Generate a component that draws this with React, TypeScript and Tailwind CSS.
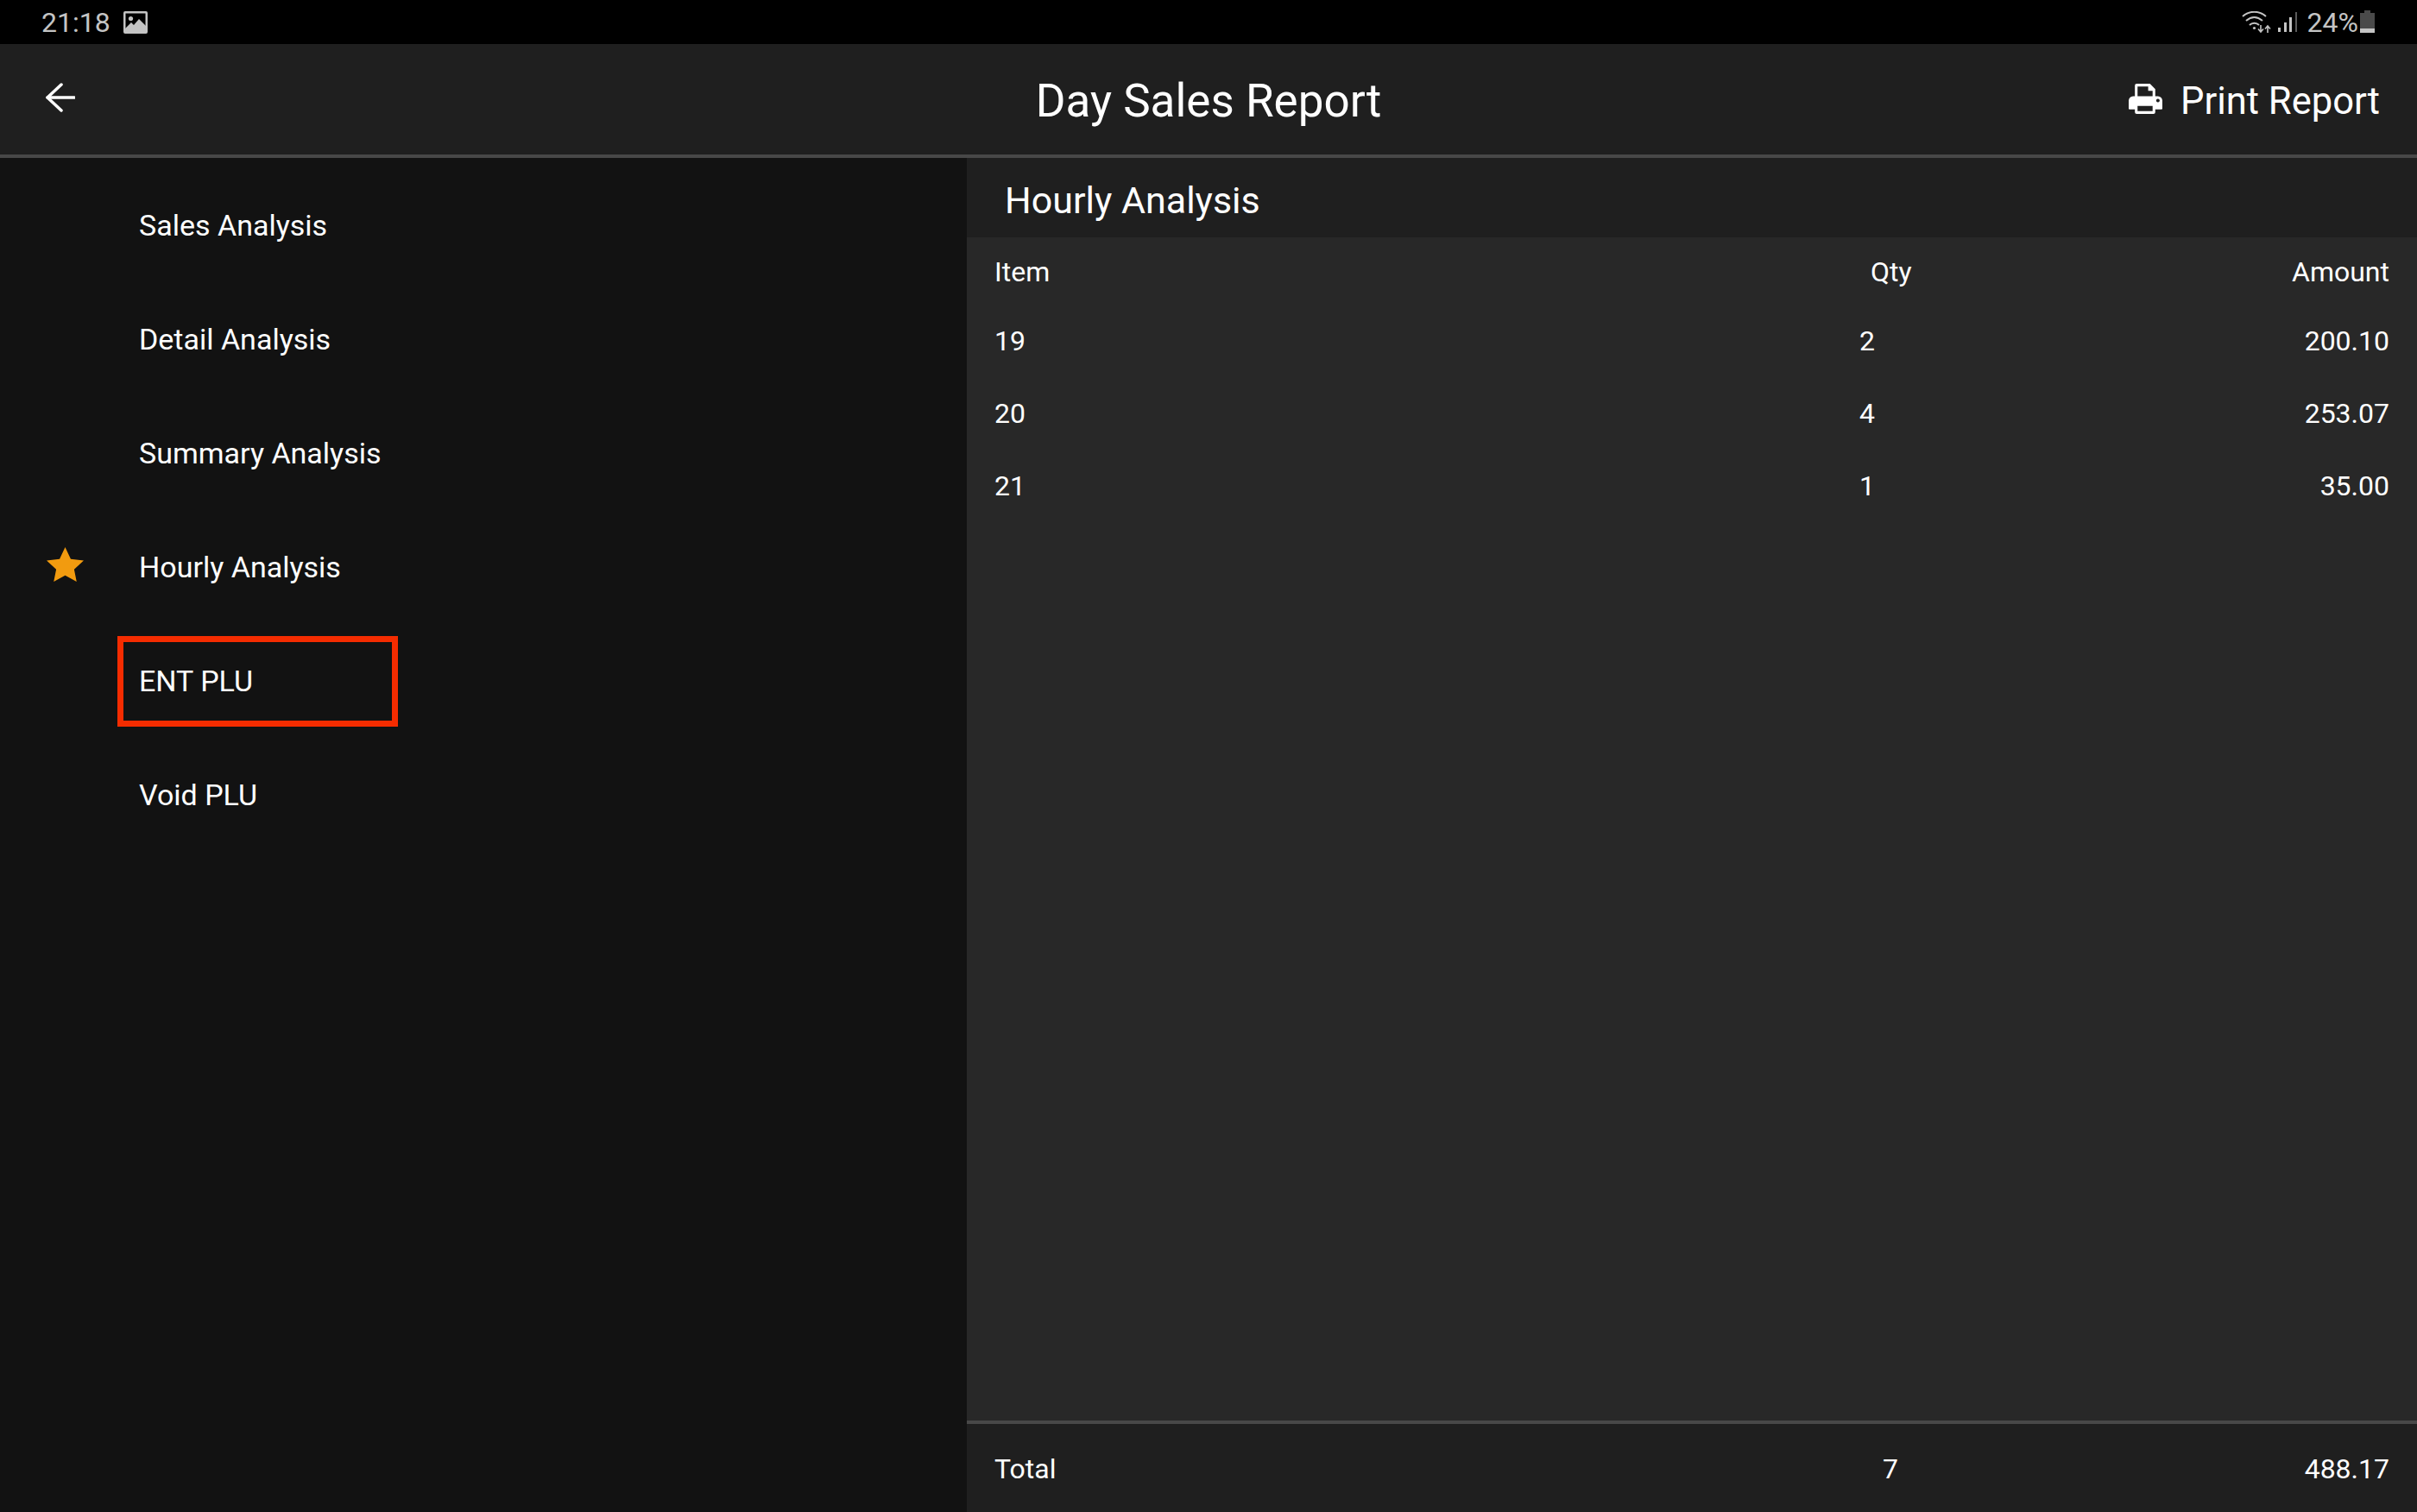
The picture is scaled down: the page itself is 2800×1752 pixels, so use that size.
const menuItems = ["Sales Analysis", "Detail Analysis", "Summary Analysis", "Hourly Analysis", "ENT PLU", "Void PLU"];

const rows = [
  { item: "19", qty: "2", amount: "200.10" },
  { item: "20", qty: "4", amount: "253.07" },
  { item: "21", qty: "1", amount: "35.00" },
];

function StatusBar() {
  return (
    <div className="flex h-[51px] items-center justify-between bg-black pl-[48px] pr-[49px] text-[32px] text-[#c4c4c4]">
      <div className="flex items-center gap-[15px]">
        <span>21:18</span>
        <svg width="28" height="26" viewBox="0 0 28 26">
          <rect x="0" y="0" width="28" height="26" rx="2" fill="#c4c4c4" />
          <rect x="2.5" y="2.5" width="23" height="21" fill="#000" />
          <circle cx="8.5" cy="8.5" r="2.6" fill="#c4c4c4" />
          <path d="M2 20 L9 13 L12 16 L18 9 L26 17 V25 H2 Z" fill="#c4c4c4" />
        </svg>
      </div>
      <div className="flex items-center">
        <svg width="34" height="26" viewBox="0 0 34 26" fill="none" stroke="#c4c4c4" strokeWidth="2">
          <path d="M1 6 C9 -1 20 -1 28 6" />
          <path d="M5 11 C11 6 18 6 24 11" />
          <path d="M9 16 C12 13 17 13 20 16" />
          <circle cx="14.5" cy="19.5" r="1.6" fill="#c4c4c4" stroke="none" />
          <path d="M22 16 V23 M19 20.5 L22 24 L25 20.5" strokeWidth="1.6" />
          <path d="M30 25 V18 M27 20.5 L30 17 L33 20.5" strokeWidth="1.6" />
        </svg>
        <svg className="ml-[8px]" width="22" height="24" viewBox="0 0 22 24" fill="#c4c4c4">
          <rect x="0" y="18" width="3" height="5" />
          <rect x="7" y="12" width="3" height="11" />
          <rect x="13" y="6" width="3" height="17" />
          <rect x="20" y="0" width="2" height="23" fill="#5a5a5a" />
        </svg>
        <span className="ml-[12px]">24%</span>
        <svg className="ml-[2px]" width="17" height="27" viewBox="0 0 17 27">
          <path d="M5 0 H12 V3 H17 V26 H0 V3 H5 Z" fill="#4a4a4a" />
          <rect x="0" y="21" width="17" height="5" fill="#c4c4c4" />
        </svg>
      </div>
    </div>
  );
}

function Header() {
  return (
    <div className="relative flex h-[132px] items-center justify-between border-b-4 border-[#484848] bg-[#1f1f1f] pb-[2px] pl-[53px] pr-[43px] text-white">
      <svg className="mb-[2px]" width="34" height="34" viewBox="0 0 34 34" fill="none" stroke="#fff" strokeWidth="3.5" strokeLinecap="round" strokeLinejoin="round">
        <path d="M2 17 H33" />
        <path d="M18 2 L2 17 L18 32" />
      </svg>
      <div className="absolute inset-x-0 top-[32px] text-center text-[53px] leading-[68px]">Day Sales Report</div>
      <div className="flex items-center gap-[21px] text-[43.5px] leading-[56px]">
        <svg width="39" height="35" viewBox="0 0 38 34" fill="#fff">
          <path
            fillRule="evenodd"
            d="M7 2 a2 2 0 0 1 2 -2 h15 l6 6 v8 h3 a5 5 0 0 1 5 5 v9 a1 1 0 0 1 -1 1 h-7 v3 a2 2 0 0 1 -2 2 H9 a2 2 0 0 1 -2 -2 v-3 H1 a1 1 0 0 1 -1 -1 V19 a5 5 0 0 1 5 -5 h2 Z M10 3 v11 h17 V8 h-5 V3 Z M10 25 v6 h17 v-6 Z M33 17 a2 2 0 1 0 0.01 0 Z"
          />
        </svg>
        <span className="pt-[7px]">Print Report</span>
      </div>
    </div>
  );
}

function Sidebar() {
  return (
    <div className="flex w-[1120px] shrink-0 flex-col bg-[#121212] pt-[12px] font-[Roboto] text-[34px] text-white">
      {menuItems.map((label) => (
        <div key={label} className="relative flex h-[132px] items-center pl-[161px]">
          {label === "Hourly Analysis" && (
            <svg className="absolute left-[54px] top-[43px]" width="43" height="40" viewBox="0 0 24 22.3" fill="#f29b0f">
              <path d="M12 0 L15.6 7.6 L24 8.6 L17.8 14.3 L19.4 22.3 L12 18.2 L4.6 22.3 L6.2 14.3 L0 8.6 L8.4 7.6 Z" />
            </svg>
          )}
          {label === "ENT PLU" ? (
            <div className="-ml-[25px] flex h-[105px] w-[325px] items-center border-[7px] border-[#f52c00] pl-[18px]">{label}</div>
          ) : (
            <span>{label}</span>
          )}
        </div>
      ))}
    </div>
  );
}

function ReportPanel() {
  return (
    <div className="flex min-w-0 flex-1 flex-col text-white">
      <div className="flex h-[92px] items-center bg-[#1f1f1f] pl-[44px] pt-[6px] text-[43px]">Hourly Analysis</div>
      <div className="flex-1 bg-[#282828] px-[32px] pt-[16px] text-[32px]">
        <div className="mb-[18px] grid h-[44px] grid-cols-[1fr_200px_500px] items-center">
          <span>Item</span>
          <span className="pl-[99px]">Qty</span>
          <span className="text-right">Amount</span>
        </div>
        {rows.map((row) => (
          <div key={row.item} className="grid h-[84px] grid-cols-[1fr_200px_500px] items-center">
            <span>{row.item}</span>
            <span className="pl-[86px]">{row.qty}</span>
            <span className="text-right">{row.amount}</span>
          </div>
        ))}
      </div>
      <div className="grid h-[106px] grid-cols-[1fr_200px_500px] items-center border-t-4 border-[#484848] bg-[#1f1f1f] px-[32px] pt-[2px] text-[32px]">
        <span>Total</span>
        <span className="pl-[113px]">7</span>
        <span className="text-right">488.17</span>
      </div>
    </div>
  );
}

export default function App() {
  return (
    <div className="flex h-[1752px] w-[2800px] flex-col overflow-hidden bg-[#121212] font-[Roboto]">
      <StatusBar />
      <Header />
      <div className="flex min-h-0 flex-1">
        <Sidebar />
        <ReportPanel />
      </div>
    </div>
  );
}
